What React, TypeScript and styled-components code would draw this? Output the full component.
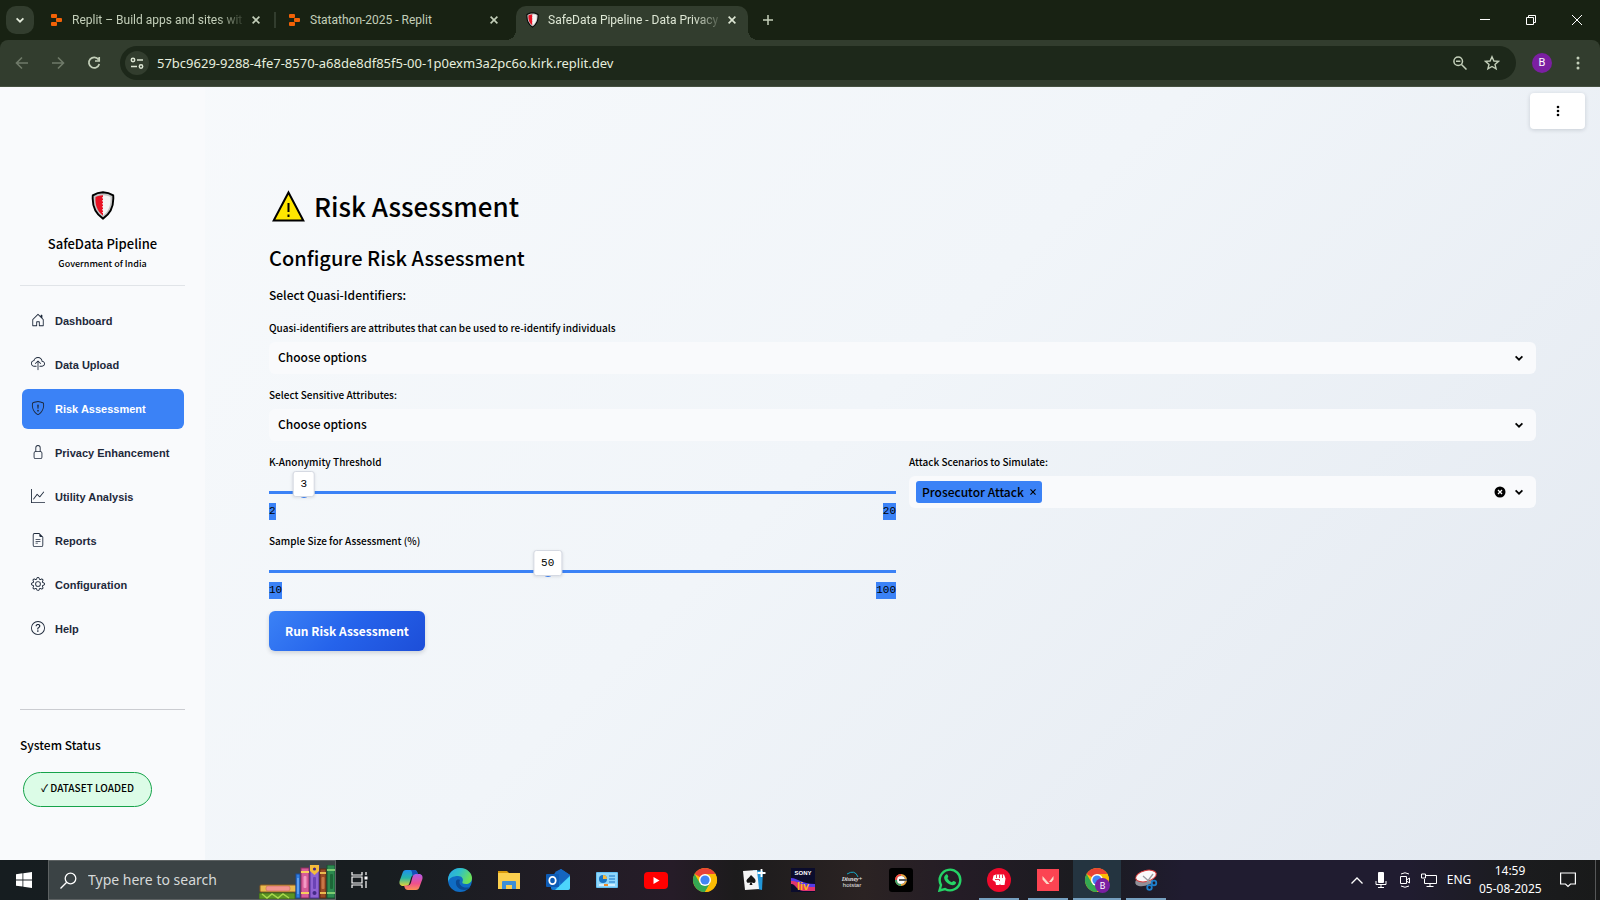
import React, { useState } from "react";
import styled, { createGlobalStyle } from "styled-components";
import {
  BsHouseDoor, BsCloudUpload, BsShieldExclamation, BsLock, BsGraphUp,
  BsFileEarmarkText, BsGear, BsQuestionCircle,
} from "react-icons/bs";

const sourceSans = `"Noto Sans CJK SC", "Open Sans", sans-serif`;
const systemUi = `"Noto Sans", "Open Sans", sans-serif`;
const blue = "#3b82f6";

const GlobalStyle = createGlobalStyle`
  *, *::before, *::after { box-sizing: border-box; }
  body { margin: 0; font-family: ${sourceSans}; color: #000; }
  button { border: 0; background: none; padding: 0; margin: 0; color: inherit; font: inherit; cursor: pointer; }
  svg { display: block; flex: none; }
  h1, h2, p { margin: 0; }
`;

const Screen = styled.div`
  min-height: 100vh;
  display: flex;
  flex-direction: column;
`;

/* ---------- Browser chrome ---------- */

const Browser = styled.header`
  background: #182213;
`;

const TabStrip = styled.div`
  height: 40px;
  display: flex;
  align-items: stretch;
  color: #c3cfb9;
  font-family: Roboto, sans-serif;
  font-size: 12px;
`;

const TabSearch = styled.button`
  width: 28px;
  height: 28px;
  margin: 6px 5px 0 6px;
  border-radius: 10px;
  background: #323d2e;
  color: #e4ecdc;
  display: grid;
  place-items: center;
`;

const Tab = styled.div<{ $active?: boolean }>`
  position: relative;
  width: 237px;
  display: flex;
  align-items: center;
  gap: 10px;
  padding: 0 13px 0 12px;
  ${(p) => p.$active && `
    width: 232px;
    margin: 6px 0 0 2px;
    padding: 0 9px 6px 10px;
    gap: 9px;
    background: #323d2e;
    color: #dde6d4;
    border-radius: 10px 10px 0 0;
    &::before, &::after {
      content: "";
      position: absolute;
      bottom: 0;
      width: 10px;
      height: 10px;
    }
    &::before { left: -10px; background: radial-gradient(circle at 0 0, transparent 10px, #323d2e 10px); }
    &::after { right: -10px; background: radial-gradient(circle at 100% 0, transparent 10px, #323d2e 10px); }
  `}
`;

const TabTitle = styled.span<{ $fade?: boolean }>`
  flex: 1;
  min-width: 0;
  overflow: hidden;
  white-space: nowrap;
  line-height: 18px;
  ${(p) => p.$fade && `
    margin-right: -8px;
    mask-image: linear-gradient(to right, #000 calc(100% - 30px), transparent);
  `}
`;

const TabClose = styled.button`
  width: 14px;
  height: 14px;
  display: grid;
  place-items: center;
`;

const TabDivider = styled.span`
  align-self: center;
  width: 2px;
  height: 16px;
  margin-left: -2px;
  margin-right: 1px;
  background: #323d2e;
`;

const NewTab = styled.button`
  width: 40px;
  display: grid;
  place-items: center;
`;

const WindowControls = styled.div`
  margin-left: auto;
  display: flex;
  color: #fff;
`;

const WindowButton = styled.button`
  width: 46px;
  display: grid;
  place-items: center;
`;

const Toolbar = styled.div`
  height: 47px;
  display: flex;
  align-items: center;
  padding: 0 4px;
  background: #323d2e;
  border-radius: 8px 8px 0 0;
  border-bottom: 1px solid #455040;
`;

const NavButton = styled.button<{ $muted?: boolean }>`
  width: 36px;
  height: 34px;
  display: grid;
  place-items: center;
  color: ${(p) => (p.$muted ? "#6f7a69" : "#c3cfb9")};
`;

const AddressBar = styled.div`
  flex: 1;
  height: 34px;
  margin: 0 12px 0 8px;
  padding: 0 13px 0 5px;
  display: flex;
  align-items: center;
  gap: 10px;
  border-radius: 17px;
  background: #1d281a;
  color: #c3cfb9;
`;

const SiteInfo = styled.button`
  width: 24px;
  height: 24px;
  border-radius: 50%;
  background: #323d2e;
  color: #dde6d4;
  display: grid;
  place-items: center;
  margin-right: -2px;
`;

const UrlInput = styled.input`
  flex: 1;
  min-width: 0;
  border: 0;
  outline: 0;
  padding: 0;
  background: none;
  color: #e6eede;
  font-family: ${systemUi};
  font-size: 13px;
  line-height: 20px;
`;

const BarIcon = styled.button`
  width: 22px;
  height: 22px;
  display: grid;
  place-items: center;
`;

const Avatar = styled.button`
  width: 20px;
  height: 20px;
  margin: 0 16px 0 4px;
  border-radius: 50%;
  background: #7b1fa2;
  color: #fff;
  font-family: Roboto, sans-serif;
  font-size: 11px;
  line-height: 20px;
`;

const BrowserMenu = styled(BarIcon)`
  width: 20px;
  margin-right: 8px;
  color: #c3cfb9;
`;

/* ---------- Page ---------- */

const Page = styled.div`
  flex: 1;
  display: flex;
  background: linear-gradient(135deg, #f8fafc 0%, #f1f5f9 50%, #e2e8f0 100%);
`;

const Sidebar = styled.aside`
  width: 205px;
  flex: none;
  padding: 104px 20px 20px;
  background: #f9fafc;
`;

const Brand = styled.div`
  display: flex;
  flex-direction: column;
  align-items: center;
  padding-bottom: 13px;
  border-bottom: 1px solid #e1e4e8;
`;

const BrandName = styled.p`
  margin-top: 14px;
  font-size: 13px;
  font-weight: 500;
  line-height: 20px;
`;

const BrandOwner = styled.p`
  margin-top: 2px;
  font-size: 9px;
  font-weight: 500;
  line-height: 16px;
`;

const Menu = styled.nav`
  display: flex;
  flex-direction: column;
  gap: 4px;
  padding: 15px 1px 60px 2px;
  border-bottom: 1px solid #cbccd1;
`;

const MenuLink = styled.a<{ $active?: boolean }>`
  height: 40px;
  display: flex;
  align-items: center;
  gap: 10px;
  padding-left: 9px;
  border-radius: 6px;
  background: ${(p) => (p.$active ? blue : "transparent")};
  color: ${(p) => (p.$active ? "#fff" : "#1e293b")};
  font-family: "Liberation Sans", Arial, sans-serif;
  font-size: 11px;
  font-weight: 700;
  line-height: 16px;
  text-decoration: none;
  white-space: nowrap;
  svg { color: #1e293b; margin-bottom: 2px; }
`;

const StatusTitle = styled.p`
  margin-top: 25px;
  font-size: 12px;
  font-weight: 500;
  line-height: 20px;
`;

const StatusBadge = styled.span`
  display: inline-flex;
  align-items: center;
  height: 35px;
  margin: 17px 0 0 3px;
  padding: 0 17px 3px;
  border: 1px solid #16a34a;
  border-radius: 18px;
  background: #dcfce7;
  font-size: 10px;
  font-weight: 500;
  line-height: 16px;
  white-space: nowrap;
`;

const Main = styled.main`
  flex: 1;
  min-width: 0;
  padding-bottom: 40px;
`;

const PageHeader = styled.div`
  display: flex;
  justify-content: flex-end;
  padding: 6px 15px 0;
`;

const OverflowButton = styled.button`
  width: 55px;
  height: 36px;
  border-radius: 4px;
  background: #fff;
  box-shadow: 0 1px 4px rgba(15, 23, 42, 0.16);
  display: grid;
  place-items: center;
`;

const Content = styled.div`
  padding: 60px 64px 0;
`;

const Title = styled.h1`
  display: flex;
  align-items: center;
  gap: 9px;
  padding-left: 3px;
  font-size: 26px;
  font-weight: 500;
  line-height: 34px;
`;

const Subtitle = styled.h2`
  margin-top: 19px;
  font-size: 20px;
  font-weight: 500;
  line-height: 32px;
`;

const Lead = styled.p`
  margin: 11px 0 15px;
  font-size: 12px;
  font-weight: 500;
  line-height: 20px;
`;

const Field = styled.div`
  & + & { margin-top: 13px; }
`;

const Label = styled.label`
  display: block;
  font-size: 10px;
  font-weight: 500;
  line-height: 16px;
`;

const SelectWrap = styled.div`
  display: grid;
  align-items: center;
  margin-top: 6px;
  > * { grid-area: 1 / 1; }
  > svg { justify-self: end; margin-right: 13px; pointer-events: none; }
`;

const Select = styled.select`
  appearance: none;
  width: 100%;
  height: 32px;
  padding: 0 9px 2px;
  border: 0;
  border-radius: 6px;
  background: #f9fafc;
  color: #000;
  font-family: ${sourceSans};
  font-size: 12px;
  font-weight: 500;
  line-height: 20px;
`;

const Columns = styled.div`
  display: grid;
  grid-template-columns: 1fr 1fr;
  gap: 13px;
  margin-top: 13px;
`;

const SliderArea = styled.div`
  position: relative;
  height: 33px;
  background: linear-gradient(${blue}, ${blue}) 0 21px / 100% 3px no-repeat;
`;

const Range = styled.input`
  appearance: none;
  display: block;
  width: calc(100% + 12px);
  height: 12px;
  margin: 0 -6px;
  background: none;
  position: relative;
  top: 16px;
  &::-webkit-slider-thumb {
    appearance: none;
    width: 12px;
    height: 12px;
    border-radius: 50%;
    background: ${blue};
  }
`;

const Bubble = styled.output`
  position: absolute;
  top: 1px;
  transform: translateX(-50%);
  padding: 0 7px;
  border: 1px solid #d5d9e2;
  border-radius: 3px;
  background: #fff;
  box-shadow: 0 1px 3px rgba(15, 23, 42, 0.1);
  font-family: "Liberation Mono", monospace;
  font-size: 11px;
  line-height: 24px;
`;

const Bounds = styled.div`
  display: flex;
  justify-content: space-between;
  font-family: "Liberation Mono", monospace;
  font-size: 11px;
  line-height: 17px;
  span { background: ${blue}; }
`;

const TagBox = styled.div`
  display: flex;
  align-items: center;
  height: 32px;
  margin-top: 6px;
  padding: 0 13px 0 7px;
  border-radius: 6px;
  background: #f9fafc;
`;

const Tag = styled.span`
  display: flex;
  align-items: center;
  gap: 6px;
  height: 22px;
  padding: 0 6px;
  border-radius: 3px;
  background: ${blue};
  font-size: 12px;
  font-weight: 500;
  line-height: 20px;
  white-space: nowrap;
`;

const TagInput = styled.input`
  flex: 1;
  min-width: 0;
  border: 0;
  outline: 0;
  background: none;
  font-family: ${sourceSans};
  font-size: 12px;
`;

const IconButton = styled.button`
  display: grid;
  place-items: center;
  & + & { margin-left: 9px; }
`;

const RunButton = styled.button`
  height: 40px;
  margin-top: 12px;
  padding: 0 16px 1px;
  border-radius: 6px;
  background: linear-gradient(135deg, #3b82f6 0%, #2563eb 50%, #1d4ed8 100%);
  box-shadow: 0 2px 4px rgba(15, 23, 42, 0.16);
  color: #fff;
  font-size: 12px;
  font-weight: 700;
  line-height: 20px;
`;

/* ---------- Taskbar ---------- */

const TaskbarRoot = styled.footer`
  height: 40px;
  display: flex;
  background: linear-gradient(90deg, #161d20 0%, #181d20 24%, #261c28 42%, #1c1b1c 46%, #2b2323 54%, #241c26 60%, #1a1b1f 68%, #201c30 74%, #201c30 88%, #1b1c1e 95%, #191a1a 100%);
  font-family: ${systemUi};
  color: #fff;
`;

const StartButton = styled.button`
  width: 48px;
  display: grid;
  place-items: center;
`;

const SearchBox = styled.label`
  width: 288px;
  display: flex;
  align-items: center;
  gap: 11px;
  padding-left: 11px;
  border: 1px solid #5d6263;
  background: #3b4345;
  overflow: hidden;
`;

const SearchInput = styled.input`
  flex: 1;
  min-width: 0;
  border: 0;
  outline: 0;
  padding: 0;
  background: none;
  font-family: ${systemUi};
  font-size: 14px;
  line-height: 20px;
  &::placeholder { color: #d6d9d9; opacity: 1; }
`;

const SearchArt = styled.span`
  align-self: flex-end;
`;

const Apps = styled.div`
  display: flex;
  gap: 1px;
`;

const AppButton = styled.button<{ $state?: "open" | "focused" }>`
  width: 48px;
  display: grid;
  place-items: center;
  background: ${(p) => (p.$state === "focused" ? "#243440" : "none")};
  ${(p) => p.$state && `
    position: relative;
    &::after {
      content: "";
      position: absolute;
      left: ${p.$state === "focused" ? 0 : 4}px;
      right: ${p.$state === "focused" ? 0 : 4}px;
      bottom: 0;
      height: 2px;
      background: #76a0c0;
    }`}
  &:first-child { margin-right: 2px; }
`;

const Tray = styled.div`
  margin-left: auto;
  display: flex;
  align-items: center;
  font-size: 12px;
  line-height: 18px;
`;

const TrayButton = styled.button<{ $wide?: boolean }>`
  width: ${(p) => (p.$wide ? 54 : 24)}px;
  height: 40px;
  display: grid;
  place-items: center;
`;

const Language = styled.button`
  width: 36px;
  text-align: center;
`;

const Clock = styled.time`
  width: 64px;
  padding-left: 2px;
  text-align: center;
  white-space: nowrap;
`;

const ShowDesktop = styled.button`
  width: 5px;
  height: 40px;
  border-left: 1px solid #565758;
`;

/* ---------- Drawings ---------- */

const stroke = { fill: "none", stroke: "currentColor" } as const;

const ReplitMark = () => (
  <svg width="11" height="12" viewBox="0 0 11 12" fill="#f26207">
    <rect width="6" height="4" rx="1" /><rect x="5" y="4" width="6" height="4" rx="1" /><rect y="8" width="6" height="4" rx="1" />
  </svg>
);

const Shield = ({ w, h }: { w: number; h: number }) => (
  <svg width={w} height={h} viewBox="0 0 24 29">
    <path d="M12 1.200C8.600 1.300 5 2.300 1.800 4.400 1 14 3.500 22 12 27.600 20.500 22 23 14 22.200 4.400 19 2.300 15.400 1.300 12 1.200Z" fill="#c4c4c4" stroke="#000" strokeWidth="1.900" />
    <path d="M12 4.200C9 4.300 7 4.900 4.500 6 4 14 6 20 12 24.600Z" fill="#e81224" />
    <path d="M12 4.200C15 4.300 17 4.900 19.500 6 20 14 18 20 12 24.600Z" fill="#f4f4f4" />
    <path d="M12 6V22" stroke="#f4f4f4" strokeWidth="1.400" strokeDasharray="1.500 1.500" />
  </svg>
);

const Cross = ({ s = 8, w = 1.6 }: { s?: number; w?: number }) => (
  <svg width={s} height={s} viewBox="0 0 8 8" {...stroke} strokeWidth={w}><path d="M.6.6l6.800 6.800M7.400.6L.6 7.400" /></svg>
);

const Chevron = () => (
  <svg width="8" height="8" viewBox="0 0 8 8" {...stroke} strokeWidth="1.700"><path d="M.6 2.300L4 5.700 7.400 2.300" /></svg>
);

const Arrow = ({ back }: { back?: boolean }) => (
  <svg width="14" height="14" viewBox="0 0 14 14" {...stroke} strokeWidth="1.600">
    <path d={back ? "M13 7H2M7 1.500L1.500 7 7 12.500" : "M1 7h11M7 1.500L12.500 7 7 12.500"} />
  </svg>
);

const Dots = ({ gap, r }: { gap: number; r: number }) => (
  <svg width="4" height="16" viewBox="0 0 4 16" fill="currentColor">
    {[-1, 0, 1].map((i) => <circle key={i} cx="2" cy={8 + i * gap} r={r} />)}
  </svg>
);

const ChromeMark = ({ badge }: { badge?: boolean }) => (
  <svg width="26" height="26" viewBox="-1 0 26 26">
    <circle cx="12" cy="13" r="12" fill="#fbbc04" />
    <path d="M12 13L1.600 7A12 12 0 0 1 22.400 7H12Z" fill="#ea4335" />
    <path d="M1.600 7A12 12 0 0 0 12 25L17.200 16 12 13 6.800 16Z" fill="#34a853" />
    <path d="M12 7H22.400A12 12 0 0 1 12 25L17.200 16Z" fill="#fbbc04" />
    <circle cx="12" cy="13" r="6" fill="#fff" /><circle cx="12" cy="13" r="4.600" fill="#4285f4" />
    {badge && (<><circle cx="17.500" cy="18.500" r="7.500" fill="#7b1fa2" /><text x="17.500" y="22" fill="#fff" fontFamily="Roboto" fontSize="9" textAnchor="middle">B</text></>)}
  </svg>
);

const Books = () => (
  <svg width="76" height="34" viewBox="0 0 76 34">
    <rect x="1" y="20" width="36" height="7" rx="1" fill="#e9b94f" stroke="#8c5a20" />
    <rect x="7" y="21" width="24" height="5" rx="2" fill="#f2948e" stroke="#c66a5c" strokeWidth=".6" />
    <rect x="0" y="28" width="36" height="6" rx="1" fill="#5c9424" stroke="#3e6b17" />
    <path d="M3 29l5 4 5-4 6 4 5-4 6 4" stroke="#a7d84c" strokeWidth="1.500" fill="none" />
    <rect x="37" y="9" width="4" height="24" fill="#2f7de0" stroke="#1b4d9a" /><path d="M39 13v16" stroke="#8fc0ff" />
    <rect x="42" y="3" width="8" height="30" fill="#d65c99" stroke="#8e2c60" /><path d="M42 7h8M42 28h8" stroke="#f7ce5b" strokeWidth="2" /><rect x="44.500" y="11" width="3" height="12" rx="1" fill="#f39ac4" />
    <rect x="51" y="0" width="9" height="33" fill="#8f63d2" stroke="#55349a" /><path d="M51 0h9v6l-4.500 4-4.500-4Z" fill="#f5bd3b" /><circle cx="55.500" cy="4" r="1.600" fill="#432a86" /><rect x="54" y="12" width="3" height="12" rx="1" fill="#6a43b5" /><circle cx="55.500" cy="28" r="2" fill="#432a86" />
    <rect x="61" y="4" width="6" height="29" fill="#9a4b25" stroke="#5e2a12" /><path d="M61 8h6M61 28h6" stroke="#e9b94f" strokeWidth="2" /><rect x="62.500" y="12" width="3" height="12" rx="1" fill="#c87746" />
    <rect x="68" y="0" width="8" height="33" fill="#2c8a50" stroke="#17522e" /><path d="M68 5h8M68 28h8" stroke="#7ecb72" strokeWidth="2" /><rect x="71" y="9" width="3" height="15" rx="1" fill="#1d6638" />
  </svg>
);

const TaskView = () => (
  <svg width="18" height="16" viewBox="0 0 18 16" {...stroke} strokeWidth="1.200">
    <path d="M1 0v3h10V0M1 16v-3h10v3M1 5h10v6H1zM15 0v3M15 9v7" /><rect x="13.500" y="4.500" width="3" height="3" fill="currentColor" stroke="none" />
  </svg>
);

const Copilot = () => (
  <svg width="24" height="22" viewBox="0 0 24 22">
    <defs>
      <linearGradient id="cpA" x1="0" y1="0" x2="0" y2="1"><stop offset="0" stopColor="#1f8ff0" /><stop offset=".5" stopColor="#27b6a8" /><stop offset="1" stopColor="#e4d436" /></linearGradient>
      <linearGradient id="cpB" x1="0" y1="0" x2="0" y2="1"><stop offset="0" stopColor="#b45ae8" /><stop offset=".6" stopColor="#f0508c" /><stop offset="1" stopColor="#fb9156" /></linearGradient>
    </defs>
    <path d="M7 1h8c2 0 3 1 3.500 3l.5 2h-3.500c-2 0-3 1-3.500 3L10.500 14c-.5 2-1.500 3-4 3H4C1 17 0 14.500 .6 12L3.500 4C4.200 2 5 1 7 1Z" fill="url(#cpA)" />
    <path d="M17 21H9c-2 0-3-1-3.500-3L5 16.500h3.500c2 0 3-1 3.500-3L13.500 8c.5-2 1.500-3 4-3H20c3 0 4 2.500 3.400 5L20.500 18c-.7 2-1.500 3-3.500 3Z" fill="url(#cpB)" />
    <path d="M13 1h2c2 0 3 1 3.500 3l.5 1.200c-2-.4-4.500-.2-5.500 1.800C13 4.500 13.500 2 11.500 1Z" fill="#154fb8" />
  </svg>
);

const Edge = () => (
  <svg width="24" height="24" viewBox="0 0 24 24">
    <defs><linearGradient id="edA" x1="0" y1="0" x2="1" y2=".4"><stop offset="0" stopColor="#2aa5e8" /><stop offset=".5" stopColor="#2fc0c8" /><stop offset="1" stopColor="#6be05a" /></linearGradient></defs>
    <circle cx="12" cy="12" r="12" fill="#0f6cc4" />
    <path d="M0 11C1 4 6 0 12 0c7 0 12 5 12 10 0 4-3 6-6 6-3 0-4-1-3.600-2 1.600-3-.4-6-4.400-6C5 8 1 10 0 14Z" fill="url(#edA)" />
    <path d="M8 13c-1 6 4 9 8 9 3 0 5-1 6.500-3-3 1-8 1-10-2-1-1-1.500-3-.5-5-2-1-3.500 0-4 1Z" fill="#0b4a94" />
  </svg>
);

const Explorer = () => (
  <svg width="22" height="19" viewBox="0 0 22 19">
    <path d="M0 0h9l2 2v3H0z" fill="#d99a0c" /><rect y="2" width="22" height="16" fill="#fbcf4e" />
    <path d="M4 18v-7q0-1 1-1h12q1 0 1 1v7h-4v-4H8v4z" fill="#3d8fd6" />
  </svg>
);

const Outlook = () => (
  <svg width="24" height="24" viewBox="0 0 24 24">
    <path d="M5 8L15 1l9 6v13q0 2-2 2H7q-2 0-2-2z" fill="#1278d4" /><path d="M9 4l6-3 9 6-9 9z" fill="#1565c0" /><path d="M24 8v12q0 2-2 2H9z" fill="#4dd4fb" />
    <rect y="6" width="13" height="13" rx="1" fill="#0d5bb5" /><ellipse cx="6.500" cy="12.500" rx="3.200" ry="3.600" fill="none" stroke="#fff" strokeWidth="1.800" />
  </svg>
);

const ControlPanel = () => (
  <svg width="22" height="16" viewBox="0 0 22 16">
    <rect width="22" height="16" rx="1" fill="#62bff2" /><rect x="1" y="1" width="20" height="14" fill="#8fd6fa" />
    <circle cx="7" cy="7" r="4" fill="#1673c5" /><path d="M7 7V3a4 4 0 0 1 4 4z" fill="#f4b73c" /><path d="M13 4h6M13 7h6M13 10h6" stroke="#1673c5" /><path d="M3 13h16" stroke="#e6f6ff" strokeWidth="1.500" /><path d="M8 13h4" stroke="#f08c28" strokeWidth="2" />
  </svg>
);

const YouTube = () => (
  <svg width="24" height="17" viewBox="0 0 24 17"><rect width="24" height="17" rx="4" fill="#f00" /><path d="M9.500 5v7l6-3.500z" fill="#fff" /></svg>
);

const Solitaire = () => (
  <svg width="24" height="24" viewBox="0 0 24 24">
    <path d="M11 2l10 1-1 19-9-2z" fill="#2196d8" /><path d="M1 3l14-1 2 19-14 1z" fill="#f5f5f5" />
    <path d="M9 7c3 3 5 4 4.500 6.500C13 15.500 10.500 15.500 9.500 14l1 3h-3l1-3C7 15.500 4.500 15 4.500 13 4.500 11 7 10 9 7Z" fill="#161616" /><path d="M19.500 1v8M15.500 5h8" stroke="#fff" strokeWidth="1.800" />
  </svg>
);

const SonyLiv = () => (
  <svg width="24" height="24" viewBox="0 0 24 24">
    <rect width="24" height="24" fill="#0b0c2c" /><path d="M0 12C8 10 8 19 24 18v5H12C5 22 4 15 0 16Z" fill="#e0356f" /><path d="M0 10c7 0 10 6 24 6v3C10 20 8 12 0 13Z" fill="#553be8" />
    <text x="12" y="7" fill="#fff" fontFamily="Liberation Sans" fontWeight="700" fontSize="6" textAnchor="middle">SONY</text>
    <text x="12" y="22" fill="#fbb51b" fontFamily="Liberation Sans" fontWeight="700" fontSize="11" textAnchor="middle">liv</text>
  </svg>
);

const Hotstar = () => (
  <svg width="24" height="24" viewBox="0 0 24 24">
    <path d="M7 6Q15 1 18 9" fill="none" stroke="#15a9c8" />
    <text x="12" y="13" fill="#e5e5e5" fontFamily="Liberation Serif" fontStyle="italic" fontWeight="700" fontSize="6" textAnchor="middle">Disney+</text>
    <text x="12" y="19" fill="#e5e5e5" fontFamily="Liberation Sans" fontSize="6" textAnchor="middle">hotstar</text>
  </svg>
);

const Zee = () => (
  <svg width="24" height="24" viewBox="0 0 24 24">
    <rect width="24" height="24" rx="3" fill="#000" /><circle cx="12" cy="12" r="5" fill="none" stroke="#e8a43c" strokeWidth="2" /><path d="M7 12a5 5 0 0 1 5-5" stroke="#e44" strokeWidth="2" fill="none" /><path d="M7 12a5 5 0 0 0 5 5" stroke="#3aa36c" strokeWidth="2" fill="none" /><circle cx="12" cy="12" r="4" fill="#fff" /><path d="M10 12h8" stroke="#555" strokeWidth="2" />
  </svg>
);

const WhatsApp = () => (
  <svg width="24" height="24" viewBox="0 0 24 24">
    <path d="M1.500 22.500L3 17A10.300 10.300 0 1 1 7 21Z" fill="none" stroke="#25d366" strokeWidth="2.400" />
    <path d="M8 6.500c1-.8 1.600 0 2.200 1.800.4 1-.7 1.400-.7 2 1 2 2.300 3.200 4.200 4 .8 0 1.200-1.400 2-1.200 1.800.7 2.800 1 2.100 2.500-1 2.200-3.600 2-6 .9-3-1.400-5.300-4-5.700-6.600C6 8.500 7 7.300 8 6.500Z" fill="#25d366" />
  </svg>
);

const BeatFist = () => (
  <svg width="24" height="24" viewBox="0 0 24 24"><circle cx="12" cy="12" r="12" fill="#ee0a2c" /><path d="M6.500 7.500L9 6.500h8l1.500 4-1 6.500h-4l-.5-1.500-.5 1.500H9l-.5-3L5.500 12Z" fill="#fff" /><path d="M9.500 6.500V10M12.500 6.500V10M15.500 6.500V10M8 11.500h4.500v1.500" stroke="#ee0a2c" strokeWidth=".8" fill="none" /></svg>
);

const Valorant = () => (
  <svg width="22" height="22" viewBox="0 0 22 22"><rect width="22" height="22" fill="#fc4452" /><path d="M5.500 7l7 8H9.500l-4-4.500zM16.500 7v3.500L14.500 13H12z" fill="#fbd9c8" /></svg>
);

const Snip = () => (
  <svg width="24" height="24" viewBox="0 0 24 24">
    <ellipse cx="10" cy="13" rx="9" ry="5" fill="#8f8f98" transform="rotate(-14 10 13)" /><ellipse cx="12" cy="8" rx="10.500" ry="5.500" fill="#fafafa" stroke="#d83a3a" transform="rotate(-14 12 8)" />
    <path d="M9 8l9 8M13 14l6-8" stroke="#9b9ba0" strokeWidth="1.300" /><circle cx="20" cy="15" r="2.300" fill="none" stroke="#1e7fcc" strokeWidth="1.800" /><circle cx="15.500" cy="19.500" r="2.300" fill="none" stroke="#1e7fcc" strokeWidth="1.800" />
  </svg>
);

/* ---------- Data ---------- */

const menu = [
  ["Dashboard", BsHouseDoor], ["Data Upload", BsCloudUpload], ["Risk Assessment", BsShieldExclamation],
  ["Privacy Enhancement", BsLock], ["Utility Analysis", BsGraphUp], ["Reports", BsFileEarmarkText],
  ["Configuration", BsGear], ["Help", BsQuestionCircle],
] as const;

const apps: { name: string; icon: React.ReactNode; state?: "open" | "focused" }[] = [
  { name: "Task View", icon: <TaskView /> },
  { name: "Copilot", icon: <Copilot /> },
  { name: "Edge", icon: <Edge /> },
  { name: "File Explorer", icon: <Explorer /> },
  { name: "Outlook", icon: <Outlook /> },
  { name: "Control Panel", icon: <ControlPanel /> },
  { name: "YouTube", icon: <YouTube /> },
  { name: "Chrome", icon: <ChromeMark /> },
  { name: "Solitaire", icon: <Solitaire /> },
  { name: "Sony LIV", icon: <SonyLiv /> },
  { name: "Hotstar", icon: <Hotstar /> },
  { name: "ZEE5", icon: <Zee /> },
  { name: "WhatsApp", icon: <WhatsApp /> },
  { name: "Beats", icon: <BeatFist />, state: "open" },
  { name: "Valorant", icon: <Valorant />, state: "open" },
  { name: "Chrome, profile B", icon: <ChromeMark badge />, state: "focused" },
  { name: "Snipping Tool", icon: <Snip />, state: "open" },
];

/* ---------- Parts ---------- */

function SelectField({ id, label }: { id: string; label: string }) {
  return (
    <Field>
      <Label htmlFor={id}>{label}</Label>
      <SelectWrap>
        <Select id={id}><option>Choose options</option></Select>
        <Chevron />
      </SelectWrap>
    </Field>
  );
}

function Slider({ id, label, min, max, initial }: { id: string; label: string; min: number; max: number; initial: number }) {
  const [value, setValue] = useState(initial);
  return (
    <Field>
      <Label htmlFor={id}>{label}</Label>
      <SliderArea>
        <Range id={id} type="range" min={min} max={max} value={value} onChange={(e) => setValue(Number(e.target.value))} />
        <Bubble htmlFor={id} style={{ left: `${((value - min) / (max - min)) * 100}%` }}>{value}</Bubble>
      </SliderArea>
      <Bounds><span>{min}</span><span>{max}</span></Bounds>
    </Field>
  );
}

function BrowserChrome() {
  return (
    <Browser>
      <TabStrip>
        <TabSearch aria-label="Search tabs"><Chevron /></TabSearch>
        <Tab><ReplitMark /><TabTitle $fade>Replit – Build apps and sites wit</TabTitle><TabClose aria-label="Close tab"><Cross /></TabClose></Tab>
        <TabDivider />
        <Tab><ReplitMark /><TabTitle>Statathon-2025 - Replit</TabTitle><TabClose aria-label="Close tab"><Cross /></TabClose></Tab>
        <Tab $active><Shield w={13} h={16} /><TabTitle $fade>SafeData Pipeline - Data Privacy</TabTitle><TabClose aria-label="Close tab"><Cross /></TabClose></Tab>
        <NewTab aria-label="New tab"><svg width="10" height="10" viewBox="0 0 10 10" {...stroke} strokeWidth="1.500"><path d="M5 0v10M0 5h10" /></svg></NewTab>
        <WindowControls>
          <WindowButton aria-label="Minimize"><svg width="10" height="10" viewBox="0 0 10 10" {...stroke}><path d="M0 4.500h10" /></svg></WindowButton>
          <WindowButton aria-label="Restore"><svg width="10" height="10" viewBox="0 0 10 10" {...stroke}><path d="M.5 2.500h7v7h-7zM2.500 2.500v-2h7v7h-2" /></svg></WindowButton>
          <WindowButton aria-label="Close"><svg width="10" height="10" viewBox="0 0 10 10" {...stroke}><path d="M0 0l10 10M10 0L0 10" /></svg></WindowButton>
        </WindowControls>
      </TabStrip>
      <Toolbar>
        <NavButton $muted aria-label="Back"><Arrow back /></NavButton>
        <NavButton $muted aria-label="Forward"><Arrow /></NavButton>
        <NavButton aria-label="Reload"><svg width="14" height="14" viewBox="0 0 14 14" {...stroke} strokeWidth="1.700"><path d="M11.500 3.500A5.300 5.300 0 1 0 12.300 8M12.200 1v4H8" /></svg></NavButton>
        <AddressBar>
          <SiteInfo aria-label="Site information"><svg width="14" height="12" viewBox="0 0 14 12" {...stroke} strokeWidth="1.500"><circle cx="3" cy="3" r="1.700" /><path d="M7 3h6M1 9.500h6" /><circle cx="11" cy="9.500" r="1.700" /></svg></SiteInfo>
          <UrlInput aria-label="Address" defaultValue="57bc9629-9288-4fe7-8570-a68de8df85f5-00-1p0exm3a2pc6o.kirk.replit.dev" />
          <BarIcon aria-label="Zoom"><svg width="14" height="14" viewBox="0 0 14 14" {...stroke} strokeWidth="1.500"><circle cx="5.200" cy="5.200" r="4.300" /><path d="M3 5.200h4.400M8.500 8.500l5 5" /></svg></BarIcon>
          <BarIcon aria-label="Bookmark"><svg width="16" height="16" viewBox="0 0 16 16" {...stroke} strokeWidth="1.400"><path d="M8 1.800l1.900 4.200 4.600.4-3.500 3 1.100 4.500L8 11.500l-4.100 2.400L5 9.400l-3.500-3L6.100 6Z" /></svg></BarIcon>
        </AddressBar>
        <Avatar aria-label="Profile B">B</Avatar>
        <BrowserMenu aria-label="Browser menu"><Dots gap={5} r={1.5} /></BrowserMenu>
      </Toolbar>
    </Browser>
  );
}

function Taskbar() {
  return (
    <TaskbarRoot>
      <StartButton aria-label="Start">
        <svg width="16" height="16" viewBox="0 0 16 16" fill="#fff"><path d="M0 2.200l6.500-.9v6.200H0zM7.300 1.200L16 0v7.500H7.300zM0 8.400h6.500v6.200L0 13.700zM7.300 8.400H16V16l-8.700-1.200z" /></svg>
      </StartButton>
      <SearchBox>
        <svg width="17" height="17" viewBox="0 0 17 17" {...stroke} strokeWidth="1.300"><circle cx="10.500" cy="6.500" r="5.300" /><path d="M6.700 10.300L.5 16.500" /></svg>
        <SearchInput placeholder="Type here to search" aria-label="Search" />
        <SearchArt><Books /></SearchArt>
      </SearchBox>
      <Apps>{apps.map((a) => <AppButton key={a.name} aria-label={a.name} $state={a.state}>{a.icon}</AppButton>)}</Apps>
      <Tray>
        <TrayButton aria-label="Hidden icons"><svg width="12" height="7" viewBox="0 0 12 7" {...stroke} strokeWidth="1.300"><path d="M.5 6.500L6 1l5.500 5.500" /></svg></TrayButton>
        <TrayButton aria-label="Microphone"><svg width="12" height="16" viewBox="0 0 12 16" {...stroke}><rect x="3" y="0" width="6" height="11" rx="1" fill="#fff" stroke="none" /><path d="M1 9v3.500h10V9M6 12v3M3 15.500h6" /></svg></TrayButton>
        <TrayButton aria-label="Camera"><svg width="12" height="16" viewBox="0 0 12 16" {...stroke}><path d="M2 2Q6-.5 10 2M2 14q4 2.500 8 0M1.500 4.500h6v7h-6zM7.500 8l3-2v5l-3-2" /></svg></TrayButton>
        <TrayButton aria-label="Network"><svg width="16" height="14" viewBox="0 0 16 14" {...stroke}><path d="M5 2.500h10.500v8H3.500V6M.5 1h4v4h-4zM9 10.500v3M5.500 13.500h7" /></svg></TrayButton>
        <Language>ENG</Language>
        <Clock>14:59<br />05-08-2025</Clock>
        <TrayButton $wide aria-label="Notifications"><svg width="16" height="16" viewBox="0 0 16 16" {...stroke} strokeWidth="1.200"><path d="M.6 1h14.800v11H10.500L8 14.500 5.500 12H.6z" /></svg></TrayButton>
        <ShowDesktop aria-label="Show desktop" />
      </Tray>
    </TaskbarRoot>
  );
}

export default function App() {
  return (
    <Screen>
      <GlobalStyle />
      <BrowserChrome />
      <Page>
        <Sidebar>
          <Brand>
            <Shield w={24} h={29} />
            <BrandName>SafeData Pipeline</BrandName>
            <BrandOwner>Government of India</BrandOwner>
          </Brand>
          <Menu>
            {menu.map(([name, Icon]) => (
              <MenuLink key={name} href="#" $active={name === "Risk Assessment"}><Icon size={14} />{name}</MenuLink>
            ))}
          </Menu>
          <StatusTitle>System Status</StatusTitle>
          <StatusBadge>✓ DATASET LOADED</StatusBadge>
        </Sidebar>
        <Main>
          <PageHeader><OverflowButton aria-label="Page menu"><Dots gap={4} r={1.3} /></OverflowButton></PageHeader>
          <Content>
            <Title>
              <svg width="33" height="32" viewBox="0 0 33 32"><path d="M16.500 2.500L31.300 30.500H1.700Z" fill="#ffe600" stroke="#000" strokeWidth="2" /><path d="M16.500 13v9M16.500 24.500v2.500" stroke="#000" strokeWidth="2" /></svg>
              Risk Assessment
            </Title>
            <Subtitle>Configure Risk Assessment</Subtitle>
            <Lead>Select Quasi-Identifiers:</Lead>
            <SelectField id="quasi" label="Quasi-identifiers are attributes that can be used to re-identify individuals" />
            <SelectField id="sensitive" label="Select Sensitive Attributes:" />
            <Columns>
              <div>
                <Slider id="threshold" label="K-Anonymity Threshold" min={2} max={20} initial={3} />
                <Slider id="sample" label="Sample Size for Assessment (%)" min={10} max={100} initial={50} />
              </div>
              <Field>
                <Label htmlFor="attacks">Attack Scenarios to Simulate:</Label>
                <TagBox>
                  <Tag>Prosecutor Attack<IconButton aria-label="Remove Prosecutor Attack"><Cross s={6} w={1.5} /></IconButton></Tag>
                  <TagInput id="attacks" />
                  <IconButton aria-label="Clear all"><svg width="12" height="12" viewBox="0 0 12 12"><circle cx="6" cy="6" r="5.500" /><path d="M4 4l4 4M8 4L4 8" stroke="#fff" strokeWidth="1.300" /></svg></IconButton>
                  <IconButton aria-label="Show options"><Chevron /></IconButton>
                </TagBox>
              </Field>
            </Columns>
            <RunButton>Run Risk Assessment</RunButton>
          </Content>
        </Main>
      </Page>
      <Taskbar />
    </Screen>
  );
}
